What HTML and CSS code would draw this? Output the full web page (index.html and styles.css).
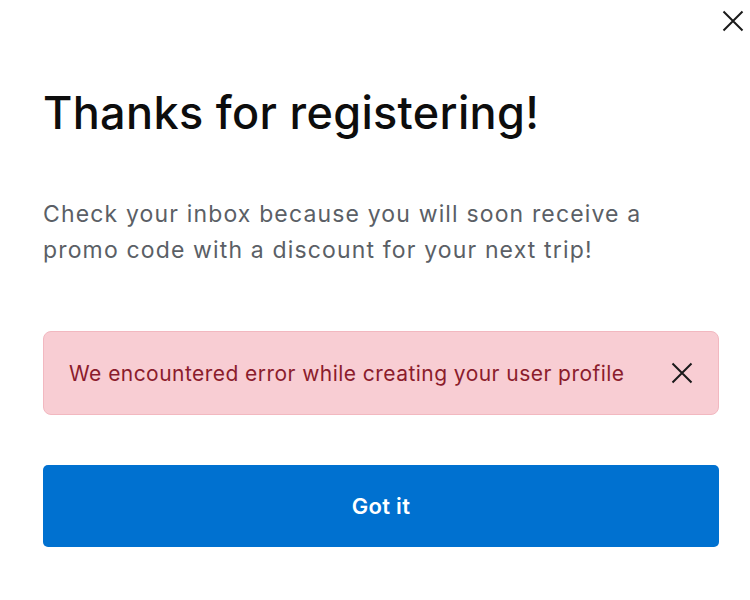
FILE: index.html
```html
<!DOCTYPE html>
<html lang="en">
<head>
<meta charset="utf-8">
<title>Thanks for registering</title>
<link rel="stylesheet" href="styles.css">
</head>
<body>
<div class="dialog">
  <div class="top">
    <button class="icon-btn top-close" aria-label="Close">
      <svg width="22" height="22" viewBox="0 0 22 22"><path d="M1.5 1.5 L20.5 20.5 M20.5 1.5 L1.5 20.5" stroke="#1a1a1a" stroke-width="2" fill="none"/></svg>
    </button>
  </div>
  <h1 class="title">Thanks for registering!</h1>
  <p class="lead">Check your inbox because you will soon receive a<br>promo code with a discount for your next trip!</p>
  <div class="alert">
    <span class="alert-text">We encountered error while creating your user profile</span>
    <button class="icon-btn" aria-label="Dismiss">
      <svg width="22" height="22" viewBox="0 0 22 22"><path d="M1.5 1.5 L20.5 20.5 M20.5 1.5 L1.5 20.5" stroke="#1a1a1a" stroke-width="2" fill="none"/></svg>
    </button>
  </div>
  <button class="primary">Got it</button>
</div>
</body>
</html>
```

FILE: styles.css
```css
html, body {
  margin: 0;
  padding: 0;
  background: #ffffff;
}
body {
  font-family: "Inter", "Noto Sans", sans-serif;
}
.dialog {
  padding: 10px 31px 0 43px;
  display: flex;
  flex-direction: column;
}
.top {
  display: flex;
  justify-content: flex-end;
  height: 22px;
  margin-right: -25px;
}
.icon-btn {
  background: none;
  border: 0;
  padding: 0;
  width: 22px;
  height: 22px;
  display: flex;
  cursor: pointer;
}
.title {
  margin: 57px 0 0;
  font-size: 45px;
  line-height: 48px;
  font-weight: 500;
  color: #0d0d0d;
  letter-spacing: 0.33px;
}
.lead {
  margin: 59px 0 0;
  font-size: 23px;
  line-height: 36px;
  color: #5b5f66;
  font-weight: 400;
  letter-spacing: 1.15px;
}
.alert {
  margin-top: 63px;
  height: 84px;
  box-sizing: border-box;
  background: #f8cdd3;
  border: 1px solid #f2b8c0;
  border-radius: 8px;
  display: flex;
  align-items: center;
  justify-content: space-between;
  padding: 0 25px;
}
.alert-text {
  font-size: 21px;
  color: #8b1c2c;
  letter-spacing: 0.45px;
}
.primary {
  margin-top: 50px;
  height: 82px;
  border: 0;
  border-radius: 5px;
  background: #0071d0;
  color: #ffffff;
  font-family: "Inter", "Noto Sans", sans-serif;
  font-size: 22px;
  font-weight: 600;
  letter-spacing: 0.3px;
  cursor: pointer;
}
```
